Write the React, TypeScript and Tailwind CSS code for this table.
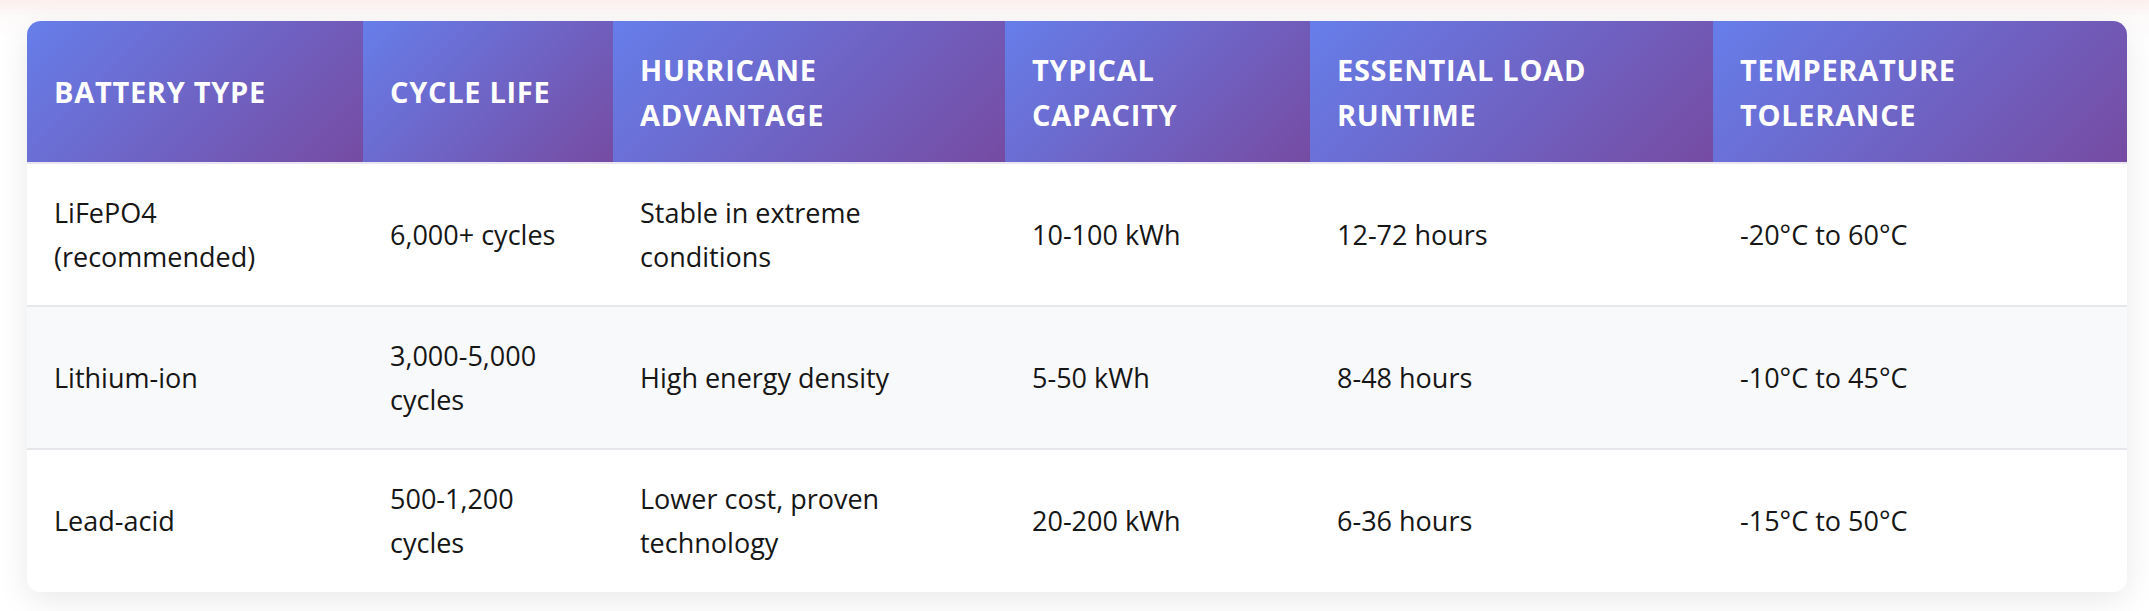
type Row = {
  type: string;
  cycles: string;
  advantage: string;
  capacity: string;
  runtime: string;
  temp: string;
};

const headers = [
  { label: "Battery Type", width: "w-[336px]" },
  { label: "Cycle Life", width: "w-[250px]" },
  { label: "Hurricane Advantage", width: "w-[392px]" },
  { label: "Typical Capacity", width: "w-[305px]" },
  { label: "Essential Load Runtime", width: "w-[403px]" },
  { label: "Temperature Tolerance", width: "w-[414px]" },
];

const rows: Row[] = [
  {
    type: "LiFePO4 (recommended)",
    cycles: "6,000+ cycles",
    advantage: "Stable in extreme conditions",
    capacity: "10-100 kWh",
    runtime: "12-72 hours",
    temp: "-20°C to 60°C",
  },
  {
    type: "Lithium-ion",
    cycles: "3,000-5,000 cycles",
    advantage: "High energy density",
    capacity: "5-50 kWh",
    runtime: "8-48 hours",
    temp: "-10°C to 45°C",
  },
  {
    type: "Lead-acid",
    cycles: "500-1,200 cycles",
    advantage: "Lower cost, proven technology",
    capacity: "20-200 kWh",
    runtime: "6-36 hours",
    temp: "-15°C to 50°C",
  },
];

export default function App() {
  return (
    <div
      className="min-h-[611px] w-full bg-[linear-gradient(to_bottom,#fcefee_0px,#fdfafa_16px,#ffffff_40px)] pl-[27px] pt-[21px]"
      style={{ fontFamily: '"Open Sans", "Noto Sans", sans-serif' }}
    >
      <div className="w-[2100px] overflow-hidden rounded-[14px] bg-white shadow-[0_8px_32px_rgba(0,0,0,0.09)]">
        <table className="w-full table-fixed border-collapse">
          <thead>
            <tr>
              {headers.map((h) => (
                <th
                  key={h.label}
                  className={`${h.width} h-[142px] border-b-2 border-[#e9e6f2] bg-[linear-gradient(135deg,#667eea_0%,#764ba2_100%)] px-[27px] text-left align-middle text-[29px] font-bold uppercase leading-[45px] tracking-[0.7px] text-white`}
                >
                  <span className="block max-w-[330px]">{h.label}</span>
                </th>
              ))}
            </tr>
          </thead>
          <tbody>
            {rows.map((r, i) => (
              <tr
                key={r.type}
                className={`${i % 2 === 1 ? "bg-[#f8f9fa]" : "bg-white"} ${
                  i < rows.length - 1 ? "border-b-2 border-[#e5e7eb]" : ""
                }`}
              >
                {[r.type, r.cycles, r.advantage, r.capacity, r.runtime, r.temp].map(
                  (v, j) => (
                    <td
                      key={j}
                      className="h-[143px] px-[27px] align-middle text-[27px] leading-[44px] text-[#161616]"
                    >
                      {v}
                    </td>
                  )
                )}
              </tr>
            ))}
          </tbody>
        </table>
      </div>
    </div>
  );
}
